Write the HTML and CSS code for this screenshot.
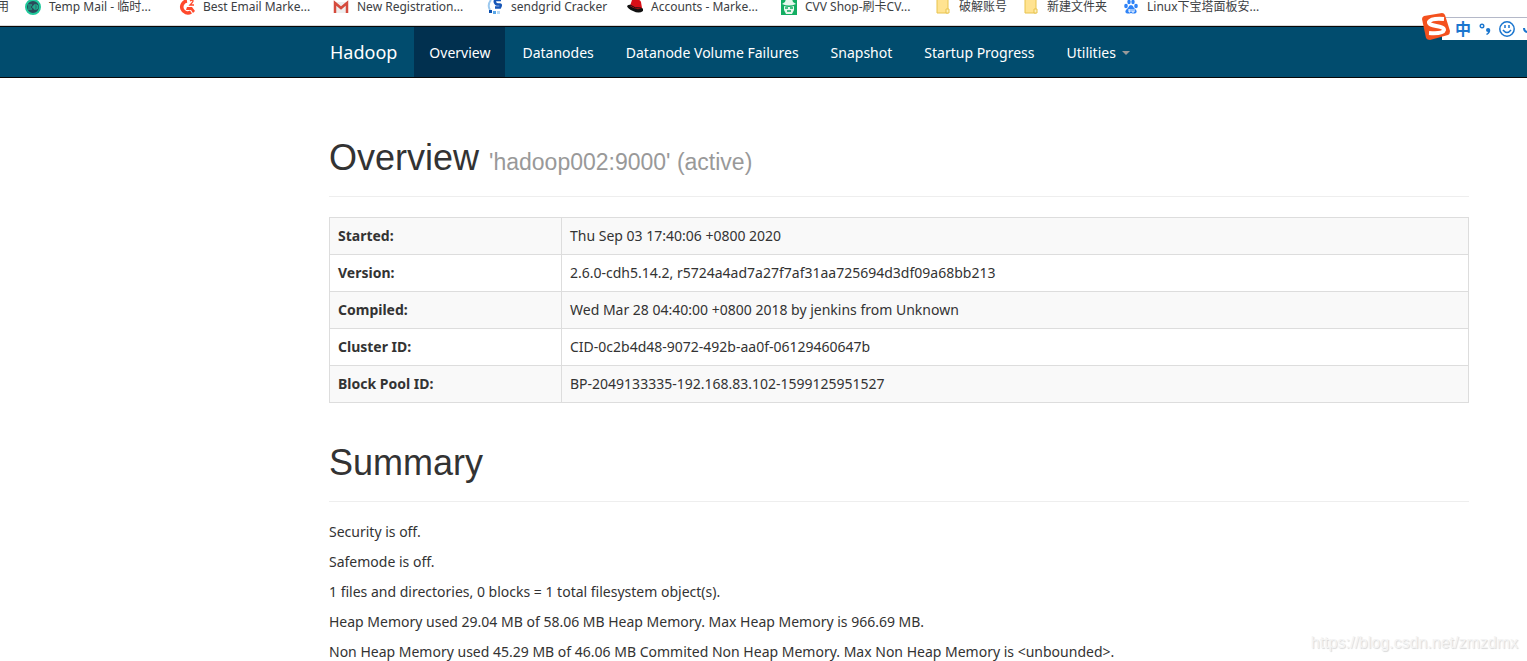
FILE: index.html
```
<!DOCTYPE html>
<html lang="en">
<head>
<meta charset="utf-8">
<title>Namenode information</title>
<link rel="stylesheet" href="styles.css">
</head>
<body>
<nav class="bookmarks" aria-label="Bookmarks">
  <a class="bookmark bookmark-cut" href="#">用</a>
  <a class="bookmark" href="#">
    <svg class="favicon" viewBox="0 0 16 16"><circle cx="8" cy="7" r="7" fill="#2b4b5b" stroke="#1fc99b" stroke-width="2"/><path d="M3 5h4M3 7h3M3 9h4M9 5h3l1 2-1 2H9zM7 7h5" fill="none" stroke="#1fc99b"/></svg>
    <span>Temp Mail - 临时...</span></a>
  <a class="bookmark" href="#">
    <svg class="favicon" viewBox="0 0 16 16"><path d="M8 1A6 6 0 1 0 12 12" fill="none" stroke="#ff492c" stroke-width="3.6"/><path d="M8 7h5l3 4-2 2-2-3H7z" fill="#ff492c"/><path d="M11 1q3-2 3 0 0 1-3 4h4" fill="none" stroke="#ff492c" stroke-width="1.3"/></svg>
    <span>Best Email Marke...</span></a>
  <a class="bookmark" href="#">
    <svg class="favicon" viewBox="0 0 16 16"><path d="M2 2h12v11H2z" fill="#eee"/><path d="M2 13V3l6 5 6-5v10" fill="none" stroke="#d54b3d" stroke-width="2.5"/></svg>
    <span>New Registration...</span></a>
  <a class="bookmark bookmark-medium" href="#">
    <svg class="favicon" viewBox="0 0 16 16"><path d="M4 0Q0 5 3 10" fill="none" stroke="#9cc9ef" stroke-width="2"/><path d="M14 0H10Q7 0 8 2.500t4 2 1 3H8" fill="none" stroke="#1756b8" stroke-width="2.5"/><path d="M2 10h3v3H2z" fill="#0b4fae"/><path d="M6 11h3v3H6z" fill="#5aa7e8"/><path d="M10 11h3v3h-3z" fill="#b5d9f5"/></svg>
    <span>sendgrid Cracker</span></a>
  <a class="bookmark" href="#">
    <svg class="favicon" viewBox="0 0 16 16"><path d="M0 6q2-2 4-1l9 2q4 1 3 4-4 3-10 0-5-2-6-5" fill="#111"/><path d="M3 6 5 0q2-2 4 0 4-1 5 2l1 6q-5 3-12-2" fill="#d90f17"/><path d="M3 5q5 4 11 3" fill="none" stroke="#111"/></svg>
    <span>Accounts - Marke...</span></a>
  <a class="bookmark" href="#">
    <svg class="favicon" viewBox="0 0 16 16"><path d="M0-1h16v16H0z" fill="#12ae62"/><path d="M4 2 5-1h6l1 3 3 2q-7 3-14 0zM3 6q5 2 10 0v4l-2 4H5l-2-4z" fill="#e8f7ed"/><path d="M4 8h3M9 8h3M6 11h4" stroke="#12ae62" stroke-width="1.5"/></svg>
    <span>CVV Shop-刷卡CV...</span></a>
  <a class="bookmark bookmark-folder" href="#">
    <svg class="favicon" viewBox="0 0 16 16"><path d="M2-1h11v14H2z" fill="#ffe391" stroke="#e8c34d"/><path d="M11 9h3v4h-3z" fill="#fff0bb" stroke="#e8c34d"/></svg>
    <span>破解账号</span></a>
  <a class="bookmark bookmark-folder-wide" href="#">
    <svg class="favicon" viewBox="0 0 16 16"><path d="M2-1h11v14H2z" fill="#ffe391" stroke="#e8c34d"/><path d="M11 9h3v4h-3z" fill="#fff0bb" stroke="#e8c34d"/></svg>
    <span>新建文件夹</span></a>
  <a class="bookmark" href="#">
    <svg class="favicon" viewBox="0 0 16 16" fill="#2f83f7"><ellipse cx="3" cy="6" rx="1.8" ry="2.3"/><ellipse cx="6" cy="2" rx="1.7" ry="2.3"/><ellipse cx="10" cy="2" rx="1.7" ry="2.3"/><ellipse cx="13" cy="6" rx="1.8" ry="2.3"/><path d="M8 5q2 0 3 3 4 3 2 5-2 1-5 0-3 1-5 0-2-2 2-5 1-3 3-3"/><path d="M6 9v3h1V9m2 0v3h2V9" fill="none" stroke="#fff"/></svg>
    <span>Linux下宝塔面板安...</span></a>
</nav>

<header class="navbar">
  <a class="brand" href="#">Hadoop</a>
  <nav class="tabs" aria-label="Main">
    <a class="tab tab-active" href="#">Overview</a>
    <a class="tab" href="#">Datanodes</a>
    <a class="tab" href="#">Datanode Volume Failures</a>
    <a class="tab" href="#">Snapshot</a>
    <a class="tab" href="#">Startup Progress</a>
    <a class="tab" href="#">Utilities<span class="caret"></span></a>
  </nav>
</header>

<main class="content">
  <h1 class="page-title">Overview <small>'hadoop002:9000' (active)</small></h1>
  <table class="info">
    <tr><th scope="row">Started:</th><td>Thu Sep 03 17:40:06 +0800 2020</td></tr>
    <tr><th scope="row">Version:</th><td>2.6.0-cdh5.14.2, r5724a4ad7a27f7af31aa725694d3df09a68bb213</td></tr>
    <tr><th scope="row">Compiled:</th><td>Wed Mar 28 04:40:00 +0800 2018 by jenkins from Unknown</td></tr>
    <tr><th scope="row">Cluster ID:</th><td>CID-0c2b4d48-9072-492b-aa0f-06129460647b</td></tr>
    <tr><th scope="row">Block Pool ID:</th><td>BP-2049133335-192.168.83.102-1599125951527</td></tr>
  </table>
  <h1 class="page-title">Summary</h1>
  <p>Security is off.</p>
  <p>Safemode is off.</p>
  <p>1 files and directories, 0 blocks = 1 total filesystem object(s).</p>
  <p>Heap Memory used 29.04 MB of 58.06 MB Heap Memory. Max Heap Memory is 966.69 MB.</p>
  <p>Non Heap Memory used 45.29 MB of 46.06 MB Commited Non Heap Memory. Max Non Heap Memory is &lt;unbounded&gt;.</p>
</main>

<div class="ime">
  <svg class="ime-logo" viewBox="0 0 28 28"><path d="M0 7Q0 5 2 4L20 1q2 0 3 2l5 16q0 3-2 4L8 28q-3 0-4-2z" fill="#f4511e"/><path d="M22 7Q9 6 7 10c-1 5 15 3 15 8q-1 4-15 3" fill="none" stroke="#fff" stroke-width="4"/></svg>
  <div class="ime-panel">
    <span class="ime-mode">中</span>
    <svg class="ime-punct" viewBox="0 0 12 14"><circle cx="3" cy="4" r="1.8" fill="none" stroke="#1b76cf" stroke-width="1.4"/><path d="M7 8q0-2 2-2 3 0 2 4-1 2-3 3l-1-1q2-1 2-2-2 0-2-2" fill="#1b76cf"/></svg>
    <svg class="ime-face" viewBox="0 0 16 16" fill="none" stroke="#1b76cf"><circle cx="8" cy="8" r="7.2" stroke-width="1.5"/><path d="M6 4v3M10 4v3M4 9q4 5 8 0" stroke-width="1.5"/></svg>
    <svg class="ime-mic" viewBox="0 0 4 16"><path d="M1 7q0 4 4 4" fill="none" stroke="#1b76cf" stroke-width="2"/></svg>
  </div>
</div>
<div class="watermark">https://blog.csdn.net/zmzdmx</div>
</body>
</html>
```
FILE: styles.css
```
* { box-sizing: border-box; }

body {
  margin: 0;
  height: 100vh;
  overflow: hidden;
  background: #fff;
  color: #333;
  font: 14px/20px "Noto Sans", "Noto Sans CJK SC", sans-serif;
}

a { color: inherit; text-decoration: none; }

.bookmarks {
  display: flex;
  height: 26px;
  border-bottom: 1px solid #d8d8d8;
  color: #3c4043;
  font-size: 12px;
  line-height: 14px;
  white-space: nowrap;
}
.bookmark { display: flex; flex: 0 0 154px; gap: 8px; }
.bookmark-cut { flex-basis: 25px; text-indent: -3px; }
.bookmark-medium { flex-basis: 140px; }
.bookmark-folder { flex-basis: 88px; }
.bookmark-folder-wide { flex-basis: 100px; }
.favicon { flex: none; width: 16px; height: 16px; }

.navbar {
  display: flex;
  padding-left: 315px;
  background: #014c6e;
  border-top: 1px solid #080808;
  border-bottom: 1px solid #080808;
  color: #fff;
}
.brand { padding: 15px 17px 15px 15px; font-size: 18px; line-height: 20px; }
.tabs { display: flex; gap: 2px; }
.tab { display: flex; align-items: center; padding: 16px 15px 14px; }
.tab-active { background: #01304f; }
.caret {
  margin-left: 6px;
  border: 4px solid transparent;
  border-top-color: #999;
  border-bottom: 0;
}

.content { padding: 20px 58px 0 329px; }
.page-title {
  margin: 40px 0 20px;
  padding-bottom: 18px;
  border-bottom: 1px solid #eee;
  font: 36px/40px "Liberation Sans", Arial, sans-serif;
}
.page-title small { color: #999; font-size: 23px; line-height: 23px; }
p { margin: 0 0 10px; }

.info { width: 100%; margin-bottom: 20px; border-collapse: collapse; }
.info th, .info td {
  height: 37px;
  padding: 8px;
  border: 1px solid #ddd;
  text-align: left;
}
.info th { width: 232px; }
.info tr:nth-child(odd) { background: #f9f9f9; }

.ime {
  position: absolute;
  top: 12px;
  right: 0;
  display: flex;
  align-items: center;
}
.ime-logo { z-index: 1; width: 28px; height: 28px; margin-right: -8px; }
.ime-panel {
  display: flex;
  align-items: center;
  gap: 8px;
  height: 23px;
  margin-top: 4px;
  padding-left: 13px;
  border-top: 1px solid #b4b8c8;
  background: #fff;
}
.ime-mode { color: #1b76cf; font-size: 16px; font-weight: 700; }
.ime-punct { width: 12px; height: 14px; }
.ime-face { width: 16px; height: 16px; }
.ime-mic { width: 4px; height: 16px; }

.watermark {
  position: absolute;
  right: 9px;
  bottom: 8px;
  color: #f4f4f4;
  font: 16px/20px "Liberation Sans", Arial, sans-serif;
  text-shadow: 1px 1px 1px #d8d8d8;
}
```
